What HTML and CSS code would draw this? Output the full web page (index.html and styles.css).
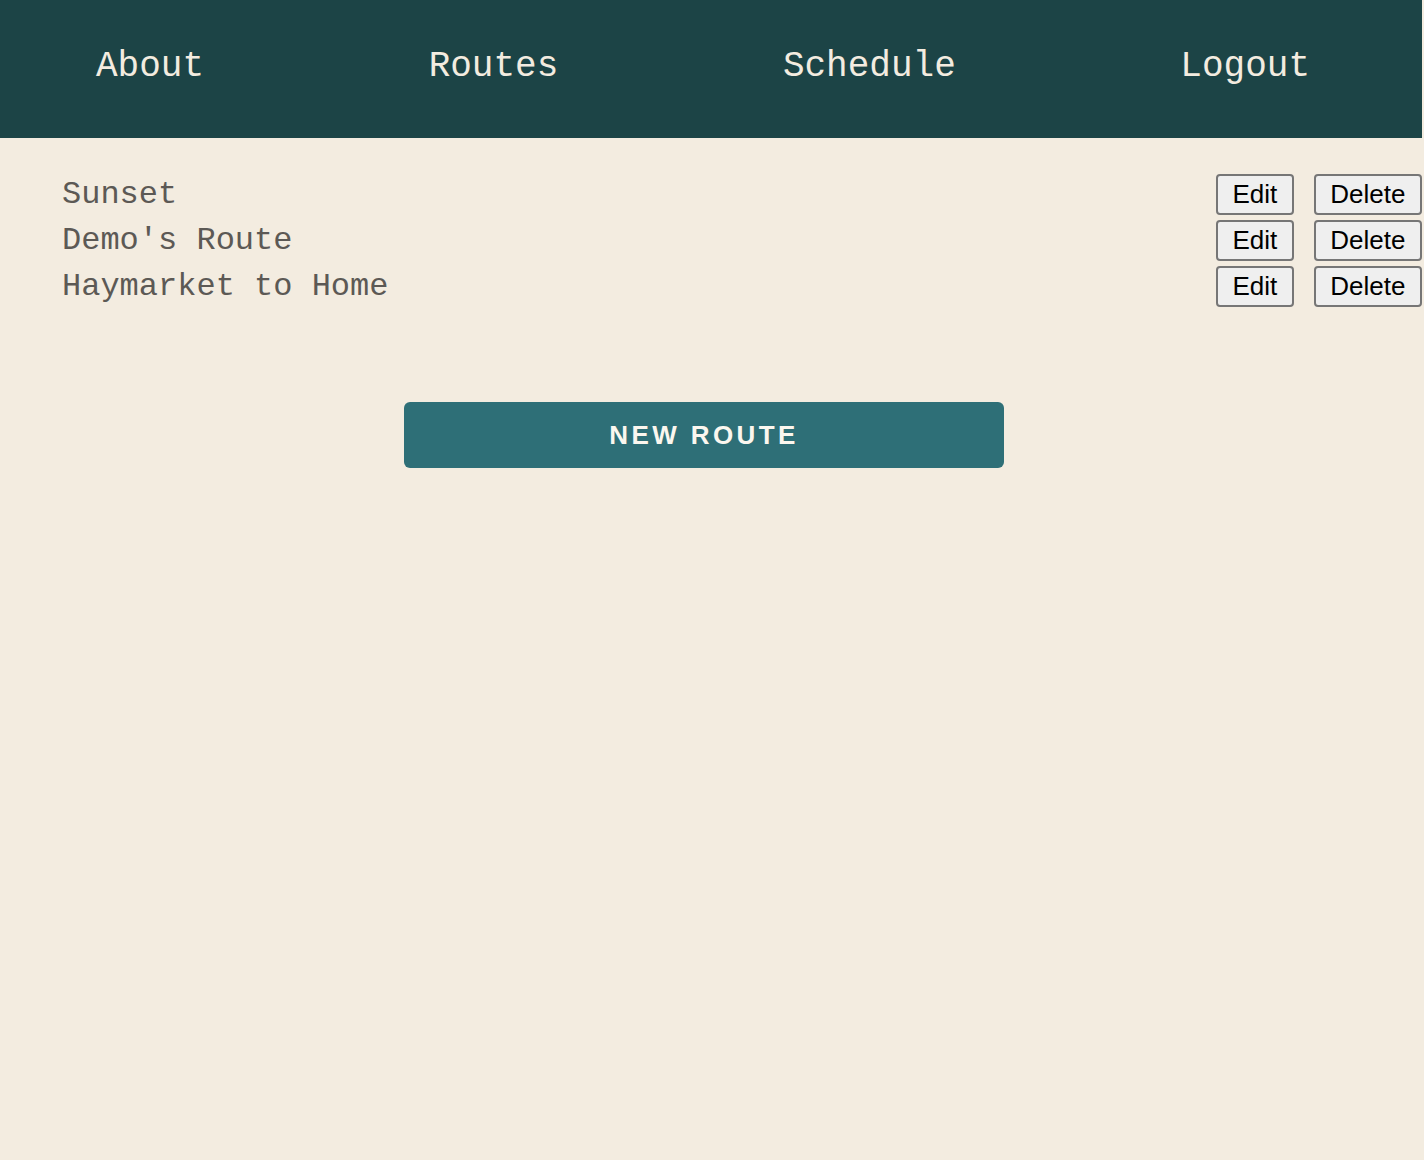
FILE: index.html
```html
<!DOCTYPE html>
<html lang="en">
<head>
<meta charset="utf-8">
<title>Routes</title>
<link rel="stylesheet" href="styles.css">
</head>
<body>
<nav class="topnav">
  <a class="nav-link" href="#">About</a>
  <a class="nav-link" href="#">Routes</a>
  <a class="nav-link" href="#">Schedule</a>
  <a class="nav-link" href="#">Logout</a>
</nav>
<main class="content">
  <ul class="route-list">
    <li class="route-row">
      <span class="route-name">Sunset</span>
      <div class="route-actions"><button class="btn">Edit</button><button class="btn">Delete</button></div>
    </li>
    <li class="route-row">
      <span class="route-name">Demo's Route</span>
      <div class="route-actions"><button class="btn">Edit</button><button class="btn">Delete</button></div>
    </li>
    <li class="route-row">
      <span class="route-name">Haymarket to Home</span>
      <div class="route-actions"><button class="btn">Edit</button><button class="btn">Delete</button></div>
    </li>
  </ul>
  <div class="new-wrap">
    <button class="new-route">NEW ROUTE</button>
  </div>
</main>
</body>
</html>
```
FILE: styles.css
```css
html, body {
  background: #f3ece0;
}
body {
  margin: 0 2px 0 0;
  font-family: "Liberation Mono", "DejaVu Sans Mono", monospace;
}
.topnav {
  height: 138px;
  background: #1c4446;
  display: flex;
  align-items: center;
  justify-content: space-between;
  padding: 0 112px 6px 96px;
  box-sizing: border-box;
}
.nav-link {
  color: #f3ece0;
  text-decoration: none;
  font-size: 36px;
  font-weight: 300;
}
.content {
  padding-top: 36px;
}
.route-list {
  list-style: none;
  margin: 0;
  padding: 0;
}
.route-row {
  display: flex;
  align-items: center;
  justify-content: space-between;
  padding-left: 62px;
  margin-bottom: 5px;
}
.route-name {
  font-size: 32px;
  color: #5c5955;
  font-weight: 300;
}
.route-actions {
  display: flex;
  gap: 20px;
}
.btn {
  font-family: "Liberation Sans", Arial, sans-serif;
  font-size: 26px;
  color: #000;
  background: #efefef;
  border: 2px solid #767676;
  border-radius: 4px;
  padding: 4px 14.5px 5px;
  line-height: 28px;
  height: 41px;
  box-sizing: border-box;
  cursor: pointer;
}
.new-wrap {
  padding: 90px 0 0 404px;
}
.new-route {
  width: 600px;
  height: 66px;
  background: #2e6f77;
  color: #fbf7ef;
  border: none;
  border-radius: 6px;
  font-family: "Liberation Sans", Arial, sans-serif;
  font-weight: 700;
  font-size: 26px;
  letter-spacing: 3.4px;
  padding: 0;
  cursor: pointer;
}
```
